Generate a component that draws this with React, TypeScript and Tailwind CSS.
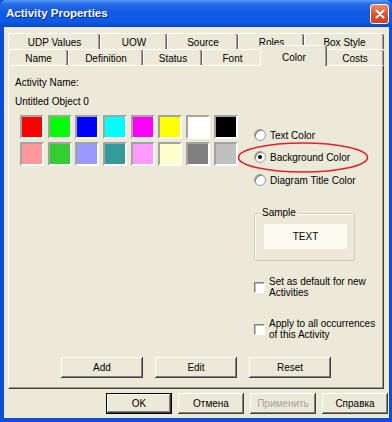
import React from "react";

const raised =
  "shadow-[inset_-1px_-1px_#404040,inset_1px_1px_#ffffff,inset_-2px_-2px_#808080]";

const swatchesTop = ["#ff0000", "#00ff00", "#0000ff", "#00ffff", "#ff00ff", "#ffff00", "#ffffff", "#000000"];
const swatchesBottom = ["#ff9999", "#33cc33", "#9999ff", "#339999", "#ff99ff", "#ffffcc", "#808080", "#c0c0c0"];

function Tab({ label, w, selected }: { label: string; w: string; selected?: boolean }) {
  if (selected) {
    return (
      <div
        className={`${w} relative z-10 -mx-[2px] h-[21px] -mb-[1px] self-end flex items-start justify-center pt-[4px] bg-[#ece9d8] border-t border-l border-white rounded-t-[2px] shadow-[inset_-1px_0_#606060,inset_-2px_0_#a0a098]`}
      >
        {label}
      </div>
    );
  }
  return (
    <div
      className={`${w} h-[16px] flex items-center justify-center pt-[1px] border-t border-l border-white rounded-t-[2px] shadow-[inset_-1px_0_#606060,inset_-2px_0_#a0a098]`}
    >
      {label}
    </div>
  );
}

function Radio({ label, checked }: { label: string; checked?: boolean }) {
  return (
    <div className="flex items-center h-[14px]">
      <div className="w-[12px] h-[12px] rounded-full bg-white border border-[#9a9a9a] shadow-[inset_1px_1px_#808080] flex items-center justify-center">
        {checked && <div className="w-[4px] h-[4px] rounded-full bg-black" />}
      </div>
      <span className="ml-[4px]">{label}</span>
    </div>
  );
}

function Check({ lines }: { lines: string[] }) {
  return (
    <div className="flex items-center">
      <div className="w-[11px] h-[11px] shrink-0 bg-white border-t border-l border-[#808080] border-b border-r border-b-white border-r-white shadow-[inset_1px_1px_#c0c0c0]" />
      <div className="ml-[4px] leading-[11px]">
        {lines.map((l) => (
          <div key={l}>{l}</div>
        ))}
      </div>
    </div>
  );
}

function Button({ label, w, disabled, def }: { label: string; w: string; disabled?: boolean; def?: boolean }) {
  return (
    <div
      className={`${w} h-[21px] flex items-center justify-center bg-[#ece9d8] ${
        def ? "border border-black shadow-[inset_-1px_-1px_#404040,inset_1px_1px_#ffffff,inset_-2px_-2px_#808080]" : raised
      } ${disabled ? "text-[#a6a49a]" : "text-black"}`}
    >
      {label}
    </div>
  );
}

export default function App() {
  return (
    <div className="relative w-[392px] h-[422px] overflow-hidden bg-[#0b4fd6] font-['Liberation_Sans',Arial,sans-serif] text-[10px] text-black">
      {/* title bar */}
      <div className="h-[27px] flex items-center justify-between pl-[6px] pr-[3px] rounded-t-[6px] bg-[linear-gradient(180deg,#5a9cf7_0%,#2a6de6_14%,#0f5ae4_45%,#0b5ae8_80%,#0846c8_100%)]">
        <span className="text-white font-bold text-[11.5px] [text-shadow:1px_1px_#0a2a80]">Activity Properties</span>
        <div className="w-[19px] h-[20px] rounded-[3px] border border-white bg-[linear-gradient(180deg,#f08a6a_0%,#e0502c_55%,#c8401e_100%)] flex items-center justify-center">
          <svg width="10" height="10" viewBox="0 0 10 10">
            <path d="M1.5 1.5 L8.5 8.5 M8.5 1.5 L1.5 8.5" stroke="#ffffff" strokeWidth="2" strokeLinecap="round" />
          </svg>
        </div>
      </div>

      {/* client area */}
      <div className="ml-[4px] mr-[3px] h-[391px] bg-[#ece9d8] flex flex-col">
        <div className="ml-[4px] mt-[6px] w-[376px]">
          <div className="flex h-[16px]">
            <Tab label="UDP Values" w="w-[92px]" />
            <Tab label="UOW" w="w-[67px]" />
            <Tab label="Source" w="w-[71px]" />
            <Tab label="Roles" w="w-[66px]" />
            <Tab label="Box Style" w="w-[80px]" />
          </div>
          <div className="flex h-[16px]">
            <Tab label="Name" w="w-[60px]" />
            <Tab label="Definition" w="w-[75px]" />
            <Tab label="Status" w="w-[59px]" />
            <Tab label="Font" w="w-[60px]" />
            <Tab label="Color" w="w-[67px]" selected />
            <Tab label="Costs" w="w-[59px]" />
          </div>

          {/* panel */}
          <div className="h-[324px] flex flex-col border-t border-l border-white border-r border-b border-r-[#404040] border-b-[#404040] shadow-[inset_-1px_-1px_#9a9a90]">
            <div className="flex">
              <div className="w-[236px] pl-[6px] pt-[11px]">
                <div className="leading-[12px]">Activity Name:</div>
                <div className="leading-[12px] mt-[7px]">Untitled Object 0</div>
                <div className="ml-[5px] mt-[7px] flex flex-col gap-[3px]">
                  {[swatchesTop, swatchesBottom].map((row, i) => (
                    <div key={i} className="flex gap-[3.7px]">
                      {row.map((c) => (
                        <div
                          key={c}
                          className="w-[24px] h-[24px] border-2 border-t-[#a4a49e] border-l-[#a4a49e] border-b-white border-r-white"
                          style={{ backgroundColor: c }}
                        />
                      ))}
                    </div>
                  ))}
                </div>
              </div>

              <div className="pl-[9px] pt-[62px] flex flex-col">
                <Radio label="Text Color" />
                <div className="mt-[8px]">
                  <Radio label="Background Color" checked />
                </div>
                <div className="mt-[9px]">
                  <Radio label="Diagram Title Color" />
                </div>

                <div className="relative mt-[26px] w-[101px] h-[48px] border border-[#cfccbe] rounded-[2px] shadow-[inset_1px_1px_#ffffff]">
                  <span className="absolute -top-[7px] left-[6px] px-[1px] bg-[#ece9d8] leading-[12px]">Sample</span>
                  <div className="ml-[9px] mt-[10px] w-[83px] h-[25px] bg-[#fcf9ee] flex items-center justify-center">TEXT</div>
                </div>

                <div className="mt-[15px]">
                  <Check lines={["Set as default for new", "Activities"]} />
                </div>
                <div className="mt-[20px]">
                  <Check lines={["Apply to all occurrences", "of this Activity"]} />
                </div>
              </div>
            </div>

            <div className="mt-auto mb-[10px] flex justify-center gap-[12px]">
              <Button label="Add" w="w-[82px]" />
              <Button label="Edit" w="w-[82px]" />
              <Button label="Reset" w="w-[82px]" />
            </div>
          </div>
        </div>

        <div className="mt-[4px] pr-[1px] flex justify-end gap-[6px]">
          <Button label="OK" w="w-[66px]" def />
          <Button label="Отмена" w="w-[66px]" />
          <Button label="Применить" w="w-[66px]" disabled />
          <Button label="Справка" w="w-[66px]" />
        </div>
      </div>

      {/* hand-drawn highlight ellipse */}
      <svg className="absolute left-[236px] top-[141px] pointer-events-none" width="134" height="33" viewBox="0 0 134 33">
        <ellipse cx="67" cy="16.5" rx="64.5" ry="14.5" fill="none" stroke="#e0202a" strokeWidth="1.6" />
      </svg>
    </div>
  );
}
